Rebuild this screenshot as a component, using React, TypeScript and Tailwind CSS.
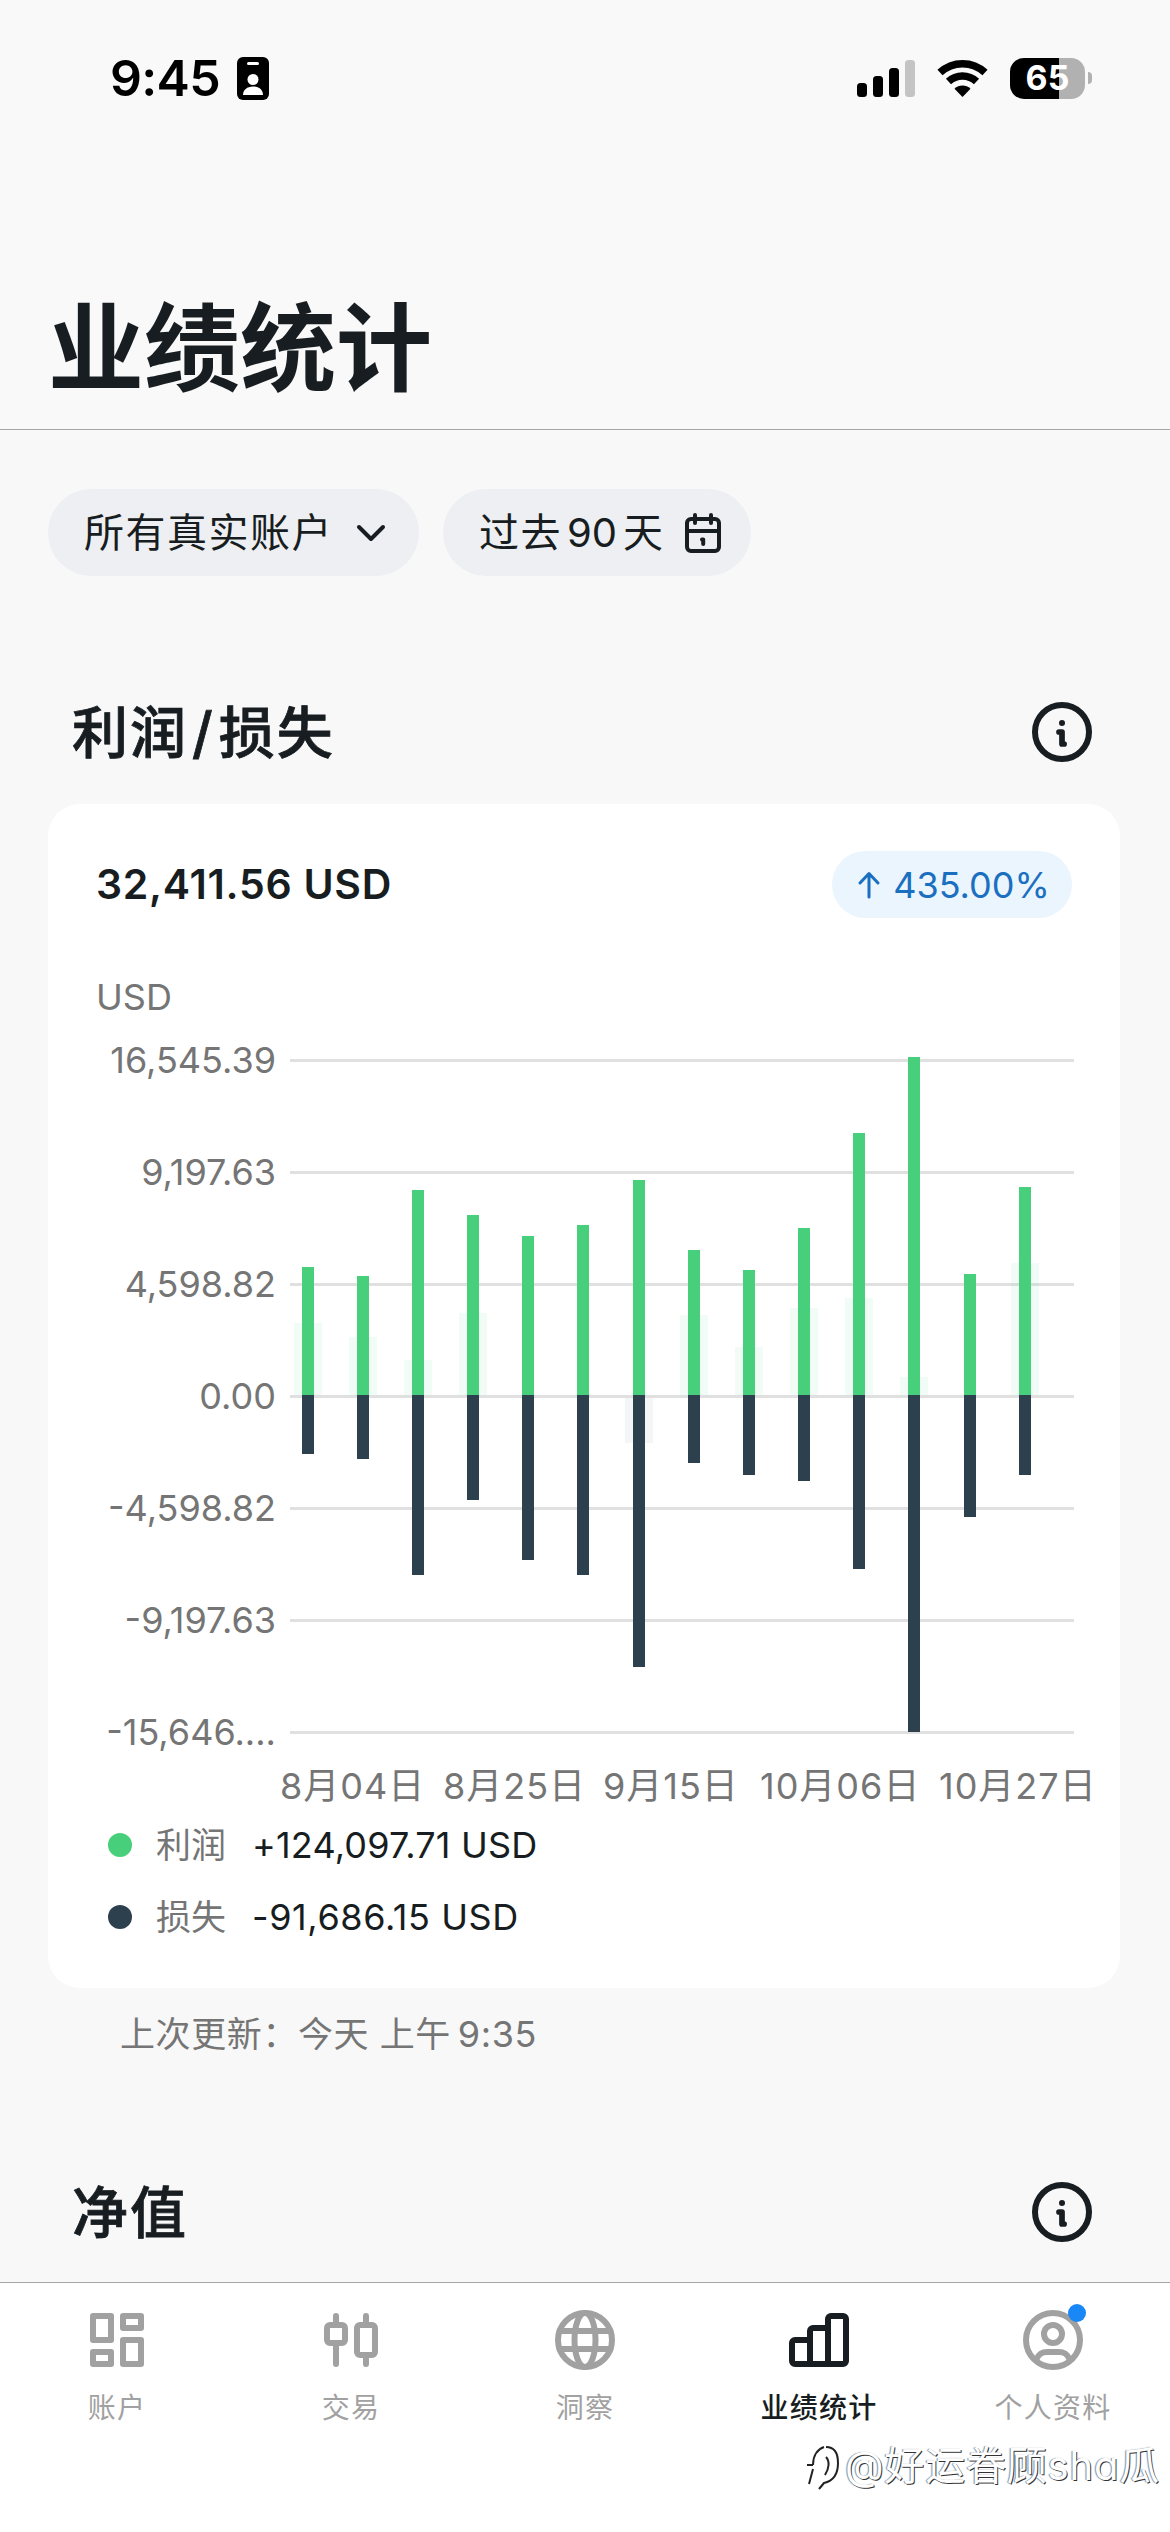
import React from "react";

const ICON = {
  fill: "none",
  stroke: "currentColor",
  strokeWidth: 2,
  strokeLinecap: "round",
  strokeLinejoin: "round",
} as const;

// [x, top of profit bar, bottom of loss bar] in plot units
const bars = [
  [12, 209, 396],
  [67, 218, 401],
  [122, 132, 517],
  [177, 157, 442],
  [232, 178, 502],
  [287, 167, 517],
  [343, 122, 609],
  [398, 192, 405],
  [453, 212, 417],
  [508, 170, 423],
  [563, 75, 511],
  [618, -1, 674],
  [674, 216, 459],
  [729, 129, 417],
];

// faint halo behind the bars: [x, y, height]
const halos = [
  [4, 265, 72],
  [59, 279, 58],
  [114, 302, 35],
  [169, 255, 82],
  [390, 257, 80],
  [445, 289, 48],
  [500, 250, 87],
  [555, 240, 97],
  [610, 319, 18],
  [721, 205, 132],
];

const yLabels = ["16,545.39", "9,197.63", "4,598.82", "0.00", "-4,598.82", "-9,197.63", "-15,646...."];

function StatusBar() {
  return (
    <div className="flex h-[156px] items-center justify-between pl-[110px] pr-[78px] text-black">
      <div className="flex items-center gap-[17px]">
        <span className="text-[50px] font-semibold leading-none tracking-[-0.7px]">9:45</span>
        <svg width="32" height="43" viewBox="0 0 32 43">
          <rect width="32" height="43" rx="6" fill="#000" />
          <rect x="10" y="5" width="12" height="3" rx="1.5" fill="#fff" />
          <circle cx="16" cy="22.5" r="5.5" fill="#fff" />
          <path d="M6 38c0-5 4-8.5 10-8.5S26 33 26 38z" fill="#fff" />
        </svg>
      </div>
      <div className="flex items-center">
        <svg width="58" height="38" viewBox="0 0 58 38">
          <rect x="0" y="24" width="10" height="14" rx="3.5" />
          <rect x="16" y="17" width="10" height="21" rx="3.5" />
          <rect x="32" y="9" width="10" height="29" rx="3.5" />
          <rect x="48" y="1" width="10" height="37" rx="3.5" fill="#c4c4c5" />
        </svg>
        <svg className="ml-[22px]" width="51" height="38" viewBox="0 0 51 38">
          <path d="M3 13.5A33 33 0 0 1 48 13.5" fill="none" stroke="#000" strokeWidth="7.5" />
          <path d="M11.5 22.5A20.5 20.5 0 0 1 39.5 22.5" fill="none" stroke="#000" strokeWidth="7.5" />
          <path d="M25.5 38l-8-8.2a11.5 11.5 0 0 1 16 0z" />
        </svg>
        <div className="ml-[22px] flex h-[41px] w-[75px] items-center justify-center rounded-[14px] bg-linear-to-r from-black from-65% to-[#b1b1b1] to-65% text-[34px] font-bold leading-none text-white">
          65
        </div>
        <div className="ml-[3px] h-[12px] w-[4px] rounded-r-full bg-[#b1b1b1]" />
      </div>
    </div>
  );
}

function InfoIcon() {
  return (
    <svg width="72" height="72" viewBox="0 0 24 24" {...ICON}>
      <circle cx="12" cy="12" r="9" />
      <circle cx="12" cy="9" r="1" fill="currentColor" stroke="none" />
      <path d="M11 12h1v4h.7" strokeWidth="1.9" />
    </svg>
  );
}

function SectionHeader({ children }: { children: React.ReactNode }) {
  return (
    <div className="flex h-[72px] items-center justify-between px-[72px]">
      <h2 className="mt-[2px] text-[56px] font-medium leading-none tracking-[2px] [-webkit-text-stroke:0.8px_#171d20]">
        {children}
      </h2>
      <InfoIcon />
    </div>
  );
}

function Chart() {
  return (
    <div>
      <div className="flex">
        <div className="flex w-[228px] flex-col items-end pt-[23px]">
          {yLabels.map((label) => (
            <div key={label} className="flex h-[112px] items-center text-[36px] leading-none text-[#757575]">
              {label}
            </div>
          ))}
        </div>
        <svg className="mt-[71px] ml-[14px] overflow-visible" width="784" height="680" viewBox="0 -6 784 680">
          {yLabels.map((label, i) => (
            <rect key={label} x="0" y={i * 112 + 1} width="784" height="3" fill="#e0e0e0" />
          ))}
          {halos.map(([x, y, h]) => (
            <rect key={x} x={x} y={y} width="28" height={h} fill="#48cf7b" opacity="0.07" />
          ))}
          <rect x="335" y="340" width="28" height="45" fill="#2d404e" opacity="0.05" />
          {bars.map(([x, top, bottom]) => (
            <g key={x}>
              <rect x={x} y={top} width="12" height={337 - top} fill="#48cf7b" />
              <rect x={x} y="337" width="12" height={bottom - 337} fill="#2d404e" />
            </g>
          ))}
        </svg>
      </div>
      <div className="-mt-[26px] flex h-[48px] items-center whitespace-nowrap pl-[232px] text-[36px] leading-none tracking-[1px] text-[#757575]">
        <span className="w-[163px]">8月04日</span>
        <span className="w-[160px]">8月25日</span>
        <span className="w-[157px]">9月15日</span>
        <span className="w-[179px]">10月06日</span>
        <span>10月27日</span>
      </div>
    </div>
  );
}

function LegendRow({ dot, label, children }: { dot: string; label: string; children: React.ReactNode }) {
  return (
    <div className="flex h-[72px] items-center pl-[60px] text-[36px] leading-none">
      <span className={`size-6 rounded-full ${dot}`} />
      <span className="ml-[24px] w-[96px] text-[35px] text-[#757575]">{label}</span>
      {children}
    </div>
  );
}

const tabs = [
  {
    label: "账户",
    icon: (
      <>
        <rect x="4" y="4" width="6" height="8" />
        <rect x="14" y="4" width="6" height="4" />
        <rect x="4" y="16" width="6" height="4" />
        <rect x="14" y="12" width="6" height="8" />
      </>
    ),
  },
  {
    label: "交易",
    icon: (
      <>
        <rect x="4" y="7" width="6" height="6" rx="1" />
        <rect x="14" y="7" width="6" height="10" rx="1" />
        <path d="M7 4v2M7 14v6M17 4v2M17 18v2" />
      </>
    ),
  },
  {
    label: "洞察",
    icon: (
      <>
        <circle cx="12" cy="12" r="9" />
        <ellipse cx="12" cy="12" rx="3.5" ry="9" />
        <path d="M3.5 9h17M3.5 15h17" />
      </>
    ),
  },
  {
    label: "业绩统计",
    active: true,
    icon: (
      <path d="M3 13a1 1 0 0 1 1-1h5V9a1 1 0 0 1 1-1h5V5a1 1 0 0 1 1-1h4a1 1 0 0 1 1 1v14a1 1 0 0 1-1 1H4a1 1 0 0 1-1-1zM9 12v8M15 8v12" />
    ),
  },
  {
    label: "个人资料",
    badge: true,
    icon: (
      <>
        <circle cx="12" cy="12" r="9" />
        <circle cx="12" cy="10" r="3" />
        <path d="M6.5 18.5C7 16.8 8.5 16 10 16h4c1.5 0 3 .8 3.5 2.5" />
      </>
    ),
  },
];

function TabBar() {
  return (
    <nav className="grid h-[250px] grid-cols-5 border-t border-[#a6a6a6] bg-white pt-[21px]">
      {tabs.map((tab) => (
        <div
          key={tab.label}
          className={`flex flex-col items-center ${tab.active ? "font-medium text-[#171d20]" : "text-[#a1a1a1]"}`}
        >
          <div className="relative">
            <svg width="72" height="72" viewBox="0 0 24 24" {...ICON}>
              {tab.icon}
            </svg>
            {tab.badge && <span className="absolute right-[3px] top-0 size-[18px] rounded-full bg-[#1a87f7]" />}
          </div>
          <span className="mt-[17px] text-[28px] leading-[30px] tracking-[1.3px]">{tab.label}</span>
        </div>
      ))}
    </nav>
  );
}

function Watermark() {
  return (
    <div className="absolute bottom-[41px] right-[10px] flex items-center text-[40px] leading-none tracking-[0.8px] text-white [font-feature-settings:'cv11'] [text-shadow:1px_1px_0_#333,-1px_0_1px_#888]">
      <svg width="36" height="50" viewBox="0 0 36 50" fill="none" stroke="#222" strokeWidth="2">
        <path d="M1 24h6M7 24c0-10 5-16 11-18" />
        <path d="M20 6c9 0 12 7 12 16 0 12-5 18-14 20l-5 6" />
        <path d="M7 28L3 43M20 16c4 4 3 12-1 18" />
      </svg>
      <span className="ml-[3px]">@好运眷顾sha瓜</span>
    </div>
  );
}

export default function App() {
  return (
    <div className="relative flex h-[2532px] w-[1170px] flex-col overflow-hidden bg-[#f8f8f9] font-['Inter','Noto_Sans_CJK_SC',sans-serif] text-[#171d20]">
      <header className="h-[430px] border-b border-[#a6a6a6] bg-[#f9f9f9]">
        <StatusBar />
        <h1 className="mt-[136px] pl-[48px] text-[96px] font-bold leading-[112px]">业绩统计</h1>
      </header>

      <div className="mt-[59px] flex gap-6 pl-[48px] text-[40px] leading-none">
        <div className="flex h-[87px] w-[371px] items-center rounded-full bg-[#eeeff2] pl-[36px]">
          <span className="tracking-[1.5px]">所有真实账户</span>
          <svg className="ml-[14px]" width="48" height="48" viewBox="0 0 24 24" {...ICON}>
            <path d="M6 9l6 6 6-6" />
          </svg>
        </div>
        <div className="flex h-[87px] w-[308px] items-center rounded-full bg-[#eeeff2] pl-[36px]">
          <span className="tracking-[1.5px]">过去</span>
          <span className="ml-[5px] mr-[6px]">90</span>
          <span>天</span>
          <svg className="ml-[16px]" width="48" height="48" viewBox="0 0 24 24" {...ICON}>
            <rect x="4" y="5" width="16" height="16" rx="2" />
            <path d="M4 11h16M8 3v4M16 3v4M11.5 15.2h.6v2.3" />
          </svg>
        </div>
      </div>

      <main className="mt-[120px] flex-1">
        <SectionHeader>
          利润<span className="mx-[4px]">/</span>损失
        </SectionHeader>
        <section className="mx-[48px] mt-[36px] h-[1184px] w-[1072px] rounded-[32px] bg-white">
          <div className="flex items-center justify-between px-[48px] pt-[47px]">
            <span className="text-[41px] font-semibold leading-none tracking-[0.7px]">32,411.56 USD</span>
            <div className="flex h-[67px] w-[240px] items-center justify-center gap-[12px] rounded-full bg-[#eaf5fe] pl-[3px] text-[36px] leading-none text-[#1a6fc0]">
              <svg width="24" height="28" viewBox="0 0 24 28" {...ICON} strokeWidth={3}>
                <path d="M12 26V3M3 12l9-9.5 9 9.5" />
              </svg>
              435.00%
            </div>
          </div>
          <div className="mt-[61px] -mb-[34px] pl-[48px] text-[36px] leading-[36px] text-[#757575]">USD</div>
          <Chart />
          <div className="-mt-[1px]">
            <LegendRow dot="bg-[#48cf7b]" label="利润">
              <span className="tracking-[0.2px]">+124,097.71 USD</span>
            </LegendRow>
            <LegendRow dot="bg-[#2d404e]" label="损失">
              <span className="tracking-[0.6px]">-91,686.15 USD</span>
            </LegendRow>
          </div>
        </section>
        <p className="mt-[28px] mb-[124px] pl-[120px] text-[35px] leading-[36px] tracking-[0.6px] text-[#757575]">
          上次更新：今天 上午<span className="ml-[7px] text-[36px]">9:35</span>
        </p>
        <SectionHeader>净值</SectionHeader>
      </main>

      <TabBar />
      <Watermark />
    </div>
  );
}
